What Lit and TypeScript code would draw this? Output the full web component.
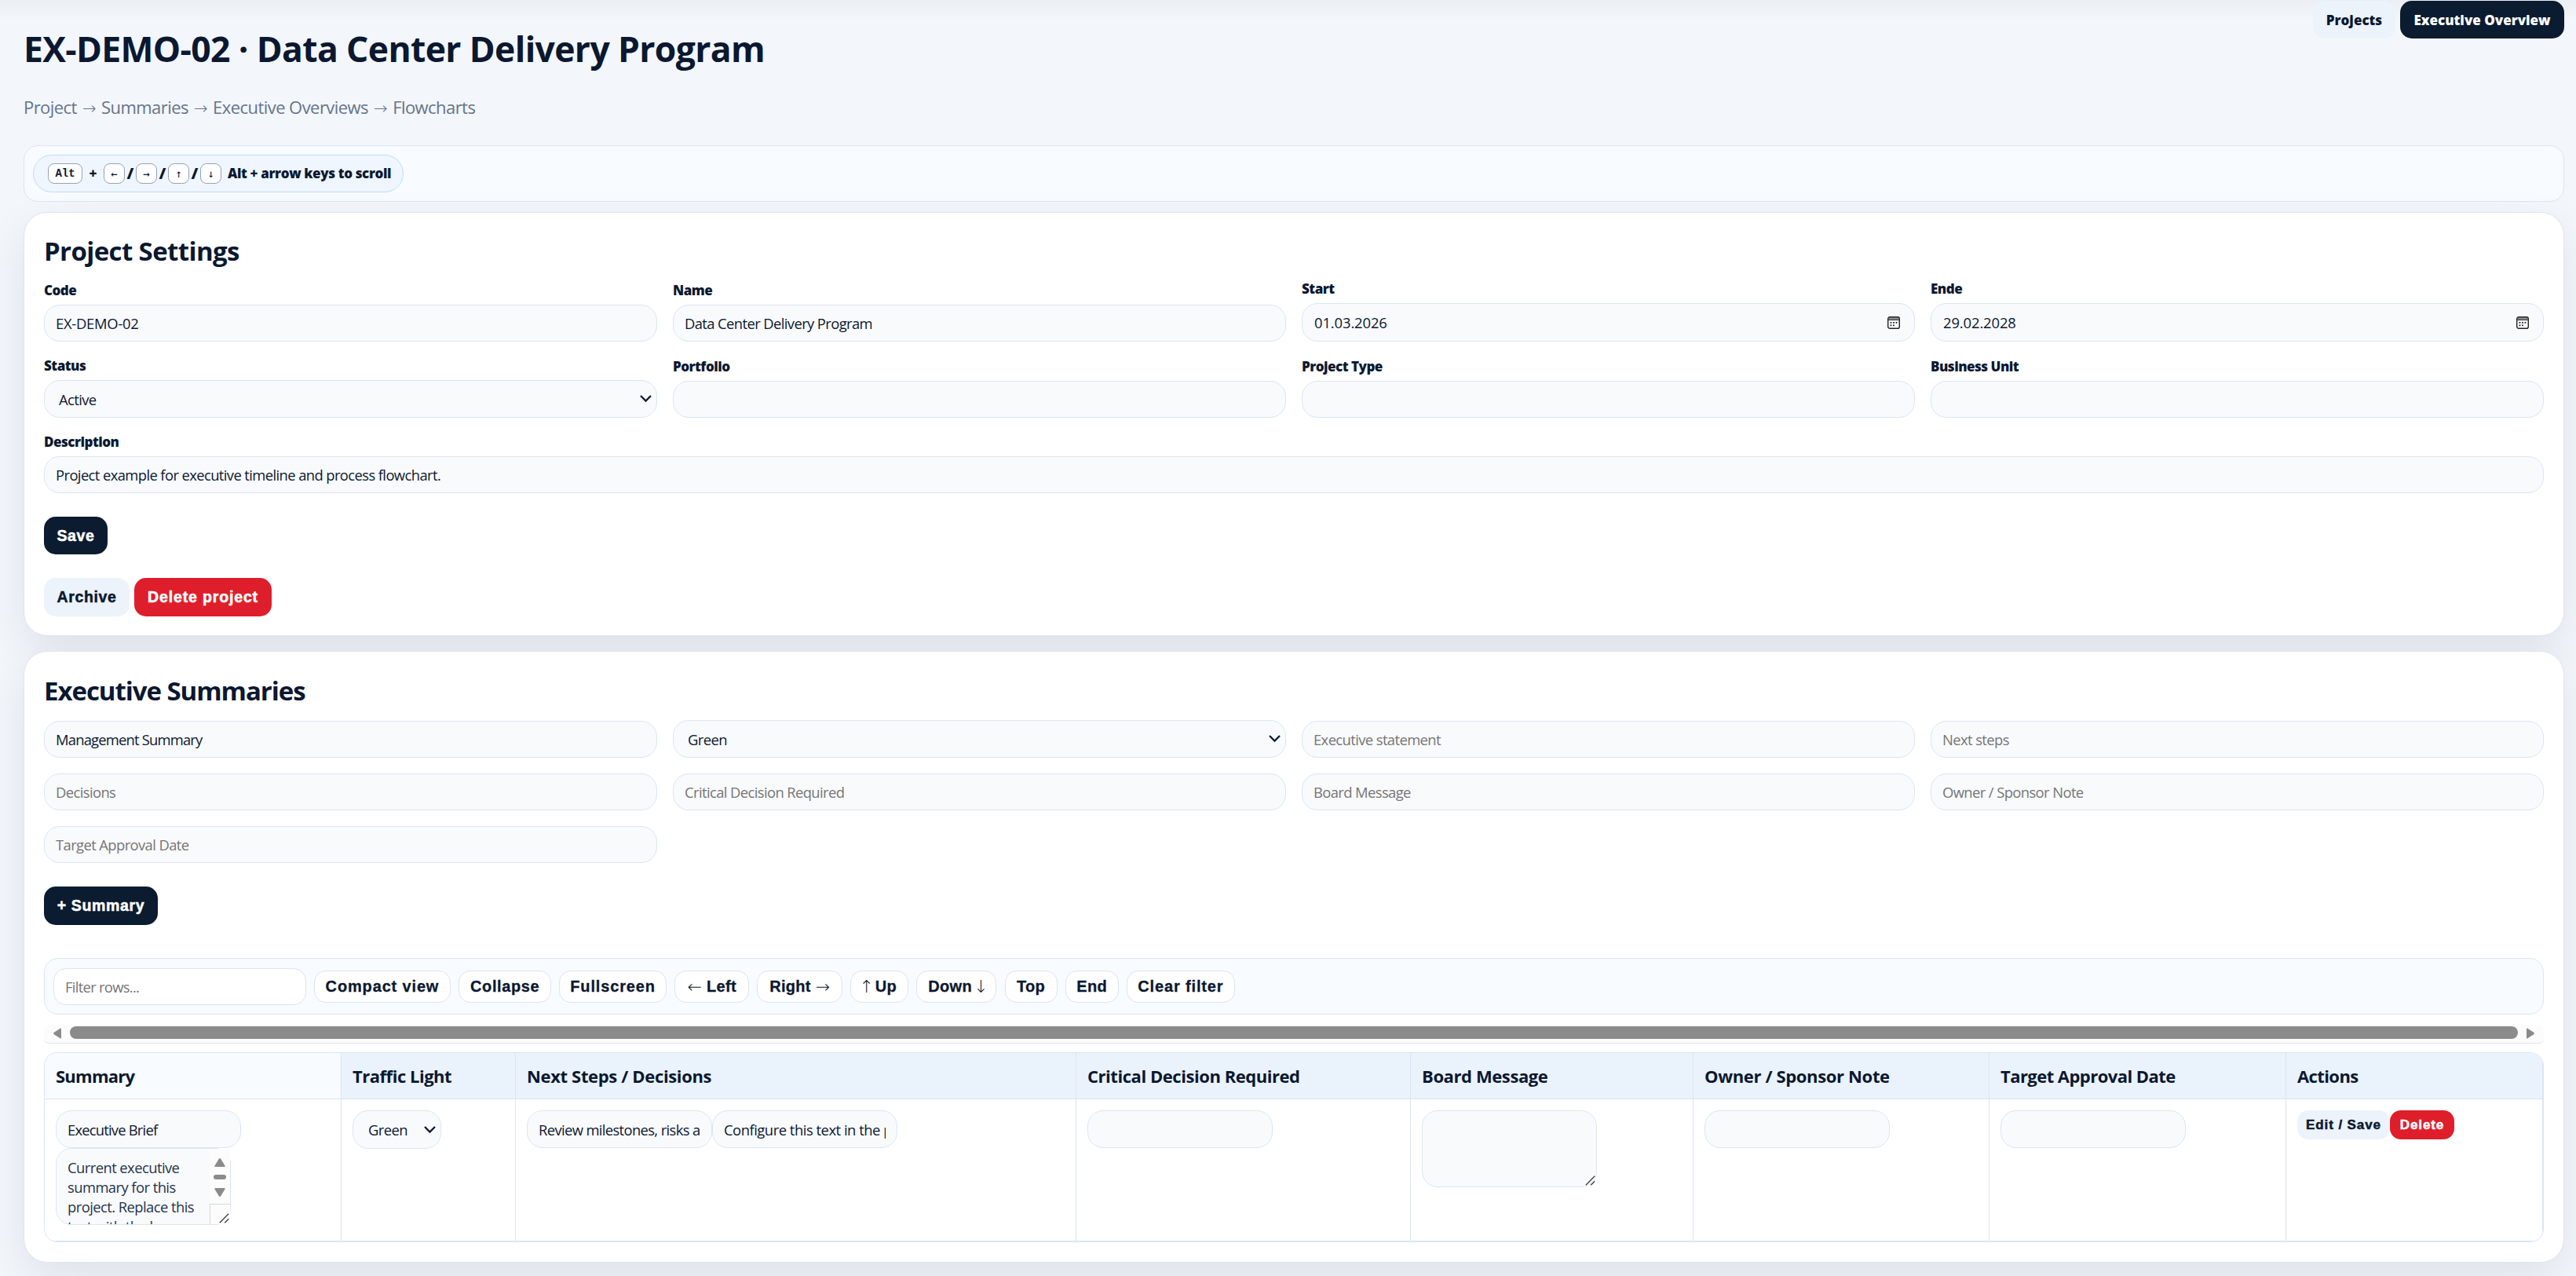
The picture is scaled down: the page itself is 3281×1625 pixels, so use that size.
import { LitElement, html, css, svg, nothing } from "lit";
import { customElement, property } from "lit/decorators.js";
import { classMap } from "lit/directives/class-map.js";
import { styleMap } from "lit/directives/style-map.js";

interface Field {
  label?: string;
  value?: string;
  placeholder?: string;
  kind?: "text" | "date" | "select";
  wide?: boolean;
  track?: number;
}

interface Action {
  text: string;
  before?: string;
  after?: string;
  vertical?: boolean;
  width: number;
  track?: number;
}

const settings: Field[] = [
  { label: "Code", value: "EX-DEMO-02", track: -0.25 },
  { label: "Name", value: "Data Center Delivery Program" },
  { label: "Start", value: "01.03.2026", kind: "date", track: -0.1 },
  { label: "Ende", value: "29.02.2028", kind: "date", track: -0.1 },
  { label: "Status", value: "Active", kind: "select" },
  { label: "Portfolio", value: "" },
  { label: "Project Type", value: "" },
  { label: "Business Unit", value: "" },
  { label: "Description", value: "Project example for executive timeline and process flowchart.", wide: true },
];

const summaryFields: Field[] = [
  { value: "Management Summary", track: -0.8 },
  { value: "Green", kind: "select" },
  { placeholder: "Executive statement" },
  { placeholder: "Next steps" },
  { placeholder: "Decisions" },
  { placeholder: "Critical Decision Required" },
  { placeholder: "Board Message" },
  { placeholder: "Owner / Sponsor Note" },
  { placeholder: "Target Approval Date" },
];

const tools: Action[] = [
  { text: "Compact view", width: 174.5, track: 0.85 },
  { text: "Collapse", width: 117.5, track: 0.6 },
  { text: "Fullscreen", width: 137, track: 0.85 },
  { text: "Left", before: "←", width: 95 },
  { text: "Right", after: "→", width: 108.5 },
  { text: "Up", before: "↑", vertical: true, width: 74 },
  { text: "Down", after: "↓", vertical: true, width: 102 },
  { text: "Top", width: 67 },
  { text: "End", width: 68 },
  { text: "Clear filter", width: 138, track: 0.85 },
];

const columns = [
  { title: "Summary", width: 378, track: -0.75 },
  { title: "Traffic Light", width: 222, track: -0.48 },
  { title: "Next Steps / Decisions", width: 714, track: -0.35 },
  { title: "Critical Decision Required", width: 426, track: -0.45 },
  { title: "Board Message", width: 360, track: -0.4 },
  { title: "Owner / Sponsor Note", width: 377, track: -0.35 },
  { title: "Target Approval Date", width: 378, track: -0.55 },
  { title: "Actions", width: 327, track: -0.6 },
];

const fieldStyles = css`
  .field {
    display: flex;
    flex-direction: column;
    justify-content: flex-end;
  }
  .label {
    font-size: 17px;
    font-weight: 800;
    line-height: 25px;
    letter-spacing: -0.5px;
    margin-bottom: 6px;
  }
  .control {
    box-sizing: border-box;
    display: flex;
    align-items: center;
    width: 100%;
    height: 47px;
    border: 1px solid #dbe5f3;
    border-radius: 20px;
    background: #f9fafc;
    padding: 0 14px;
  }
  .control.select {
    height: 48px;
    padding: 0 5px 0 18px;
  }
  .control.date {
    height: 49px;
    padding: 0 18px 0 15px;
  }
  .entry {
    flex: 1;
    min-width: 0;
    height: 100%;
    border: 0;
    padding: 0;
    background: transparent;
    outline: none;
    color: #0b1830;
    font: 400 18.4px "Open Sans", "Noto Sans", sans-serif;
    letter-spacing: -0.6px;
  }
  .entry::placeholder {
    color: #757575;
    opacity: 1;
  }
  .icon {
    flex: none;
    display: block;
  }
`;

const chevron = svg`<svg class="icon" width="17" height="12" viewBox="0 0 17 12"><path d="M2 2 8.500 8.500 15 2" fill="none" stroke="#0b1830" stroke-width="2.3"/></svg>`;

const calendar = svg`<svg class="icon" width="16" height="16" viewBox="0 0 16 16">
  <rect x="1.500" y="1.200" width="13" height="3" fill="#8a8a8a"/>
  <rect x="0.700" y="0.700" width="14.600" height="14.600" rx="2.400" fill="none" stroke="#222" stroke-width="1.400"/>
  <path d="M1 4.500h14" stroke="#333" stroke-width="1"/>
  <g fill="#111"><rect x="3.600" y="7" width="1.700" height="1.700"/><rect x="7.100" y="7" width="1.700" height="1.700"/><rect x="10.600" y="7" width="1.700" height="1.700"/><rect x="3.600" y="10.500" width="1.700" height="1.700"/><rect x="7.100" y="10.500" width="1.700" height="1.700"/></g>
</svg>`;

const grip = svg`<svg class="grip" width="13" height="13" viewBox="0 0 13 13"><path d="M.8 12.200 12.200.8M7.200 12.200 12.200 7.200" stroke="#444" stroke-width="1.4" fill="none"/></svg>`;

@customElement("form-field")
export class FormField extends LitElement {
  @property({ attribute: false }) data: Field = {};
  static styles = [
    fieldStyles,
    css`
      :host {
        display: block;
        min-width: 0;
      }
    `,
  ];
  render() {
    const f = this.data;
    return html`<label class="field">
      ${f.label ? html`<span class="label">${f.label}</span>` : nothing}
      <span class=${classMap({ control: true, select: f.kind === "select", date: f.kind === "date" })}>
        <input
          class="entry"
          .value=${f.value ?? ""}
          placeholder=${f.placeholder ?? ""}
          style=${styleMap(f.track !== undefined ? { letterSpacing: `${f.track}px` } : {})}
        />
        ${f.kind === "select" ? chevron : f.kind === "date" ? calendar : nothing}
      </span>
    </label>`;
  }
}

@customElement("app-root")
export class AppRoot extends LitElement {
  static styles = css`
    :host {
      display: block;
      height: 1625px;
      overflow: hidden;
      color: #0b1830;
      background: linear-gradient(#ebeef3, rgba(235, 238, 243, 0) 26px) #f3f6fb;
      font-family: "Open Sans", "Noto Sans", "Liberation Sans", sans-serif;
    }
    .page {
      padding: 0 15px 0 30px;
    }
    .top {
      display: flex;
      justify-content: space-between;
      align-items: flex-start;
      height: 185px;
    }
    .title {
      margin: 32px 0 0;
      font-size: 44.5px;
      line-height: 60px;
      letter-spacing: -0.65px;
      font-weight: 700;
    }
    .trail {
      margin: 29px 0 0;
      font-size: 22px;
      line-height: 30px;
      letter-spacing: -0.56px;
      color: #64748b;
    }
    .trail-arrow {
      font: 200 21px/20px "DejaVu Sans Light", "DejaVu Sans", sans-serif;
      letter-spacing: 1px;
      margin: 0 0.3px 0 2px;
    }
    .nav {
      display: flex;
      gap: 6px;
      padding-top: 1px;
    }
    .link {
      box-sizing: border-box;
      height: 48px;
      width: 105px;
      border-radius: 15px;
      background: #ecf3fb;
      font-size: 17px;
      line-height: 50px;
      font-weight: 800;
      text-align: center;
    }
    .link.active {
      width: 209px;
      color: #fff;
      background: #0b1b30;
    }
    .hint-bar {
      box-sizing: border-box;
      height: 72px;
      border: 1px solid #dbe5f3;
      border-radius: 18px;
      background: #f8fbff;
      padding: 11px;
    }
    .hint {
      box-sizing: border-box;
      display: flex;
      align-items: center;
      width: 472px;
      height: 48px;
      border: 1px solid #bfdbfe;
      border-radius: 24px;
      background: #eff6ff;
      padding: 0 0 1px 18px;
      font-size: 17px;
      font-weight: 800;
    }
    .key {
      box-sizing: border-box;
      width: 27px;
      height: 26px;
      border: 1px solid #94a3b8;
      border-radius: 8px;
      background: #fff;
      font: 400 14px/25px "DejaVu Sans Mono", monospace;
      text-align: center;
    }
    .key.alt {
      width: 44px;
      font-family: "Liberation Mono", monospace;
      font-weight: 700;
    }
    .plus {
      width: 27px;
      text-align: center;
    }
    .slash {
      width: 14px;
      text-align: center;
      font-size: 20px;
    }
    .hint-text {
      margin-left: 8px;
      letter-spacing: -0.37px;
      white-space: nowrap;
    }
    .card {
      box-sizing: border-box;
      border: 1px solid #dbe5f3;
      border-radius: 30px;
      background: #fff;
      padding: 27px 25px 0;
      box-shadow: 0 20px 56px rgba(15, 23, 42, 0.085);
    }
    .settings {
      height: 540px;
      margin-top: 13px;
    }
    .summaries {
      height: 779px;
      margin-top: 19px;
    }
    .heading {
      margin: 0;
      font-size: 33px;
      line-height: 44px;
      letter-spacing: -0.62px;
      font-weight: 700;
    }
    .summaries .heading {
      padding-top: 1px;
      letter-spacing: -1.05px;
    }
    .grid {
      display: grid;
      grid-template-columns: repeat(4, minmax(0, 1fr));
      column-gap: 20px;
      row-gap: 18px;
      align-items: end;
      margin-top: 13px;
    }
    .summaries .grid {
      margin-top: 15px;
      row-gap: 20px;
    }
    .wide {
      grid-column: 1 / -1;
    }
    .actions {
      display: flex;
      gap: 6px;
      margin-top: 30px;
    }
    .btn {
      box-sizing: border-box;
      height: 49px;
      border: 0;
      border-radius: 15px;
      padding: 0;
      color: #fff;
      background: #0b1b30;
      font: 700 19.5px "Liberation Sans", sans-serif;
      letter-spacing: 0.65px;
      -webkit-text-stroke: 0.5px currentColor;
      text-align: center;
      white-space: nowrap;
    }
    .save {
      width: 81px;
      height: 48px;
    }
    .archive {
      width: 109px;
    }
    .remove {
      width: 175px;
      letter-spacing: 0.85px;
    }
    .add {
      width: 145px;
    }
    .soft {
      color: #0b1830;
      background: #ecf3fb;
    }
    .danger {
      background: #de1e2a;
    }
    .tools {
      box-sizing: border-box;
      display: flex;
      align-items: center;
      gap: 10.2px;
      height: 72px;
      margin-top: 42px;
      border: 1px solid #dbe5f3;
      border-radius: 18px;
      background: #f8fbff;
      padding: 0 11px;
    }
    .filter {
      box-sizing: border-box;
      width: 321.5px;
      height: 47px;
      border: 1px solid #dbe5f3;
      border-radius: 16px;
      padding: 0 14px;
      background: #fff;
      font: 400 18.4px "Open Sans", sans-serif;
      letter-spacing: -0.7px;
    }
    .filter::placeholder {
      color: #757575;
    }
    .tool {
      box-sizing: border-box;
      display: flex;
      align-items: center;
      justify-content: center;
      gap: 6px;
      height: 41px;
      border: 1px solid #dbe5f3;
      border-radius: 15px;
      padding: 0;
      color: #0b1830;
      background: #fff;
      font: 700 20px "Liberation Sans", sans-serif;
      letter-spacing: 0.3px;
      -webkit-text-stroke: 0.3px currentColor;
      white-space: nowrap;
    }
    .arrow {
      font: 200 22px/24px "DejaVu Sans Light", "DejaVu Sans", sans-serif;
      -webkit-text-stroke: 0;
      letter-spacing: 0;
      margin-top: 2px;
    }
    .arrow.vertical {
      margin-left: -4px;
      margin-right: -4px;
    }
    .scroll {
      box-sizing: border-box;
      display: flex;
      align-items: center;
      justify-content: space-between;
      height: 24px;
      margin-top: 13px;
      border-bottom: 1px solid #dbe5f3;
      border-radius: 6px;
      background: #fcfcfc;
      padding: 0 12px 4px;
    }
    .thumb {
      flex: 1;
      height: 16px;
      margin: 1px 11px 0;
      border-radius: 8px;
      background: #8b8b8b;
    }
    .tri {
      width: 10px;
      height: 14px;
      fill: #8b8b8b;
      margin-top: 2px;
    }
    .frame {
      box-sizing: border-box;
      height: 242px;
      margin-top: 11px;
      border: 1px solid #dbe5f3;
      border-radius: 17px;
      overflow: hidden;
    }
    .table {
      width: 100%;
      table-layout: fixed;
      border-collapse: separate;
      border-spacing: 0;
    }
    .th,
    .td {
      box-sizing: border-box;
      border-right: 1px solid #dbe5f3;
      border-bottom: 1px solid #dbe5f3;
      text-align: left;
    }
    .th {
      height: 59px;
      padding: 0 14px;
      background: #eaf2fc;
      font-size: 22px;
      line-height: 30px;
      font-weight: 700;
      white-space: nowrap;
    }
    .th:first-child {
      background: #f8fbff;
    }
    .td {
      height: 181px;
      padding: 14px 14px 0;
      vertical-align: top;
    }
    .stack {
      display: flex;
      flex-direction: column;
    }
    .pair {
      display: flex;
    }
    .area {
      position: relative;
      box-sizing: border-box;
      display: flex;
      width: 223px;
      height: 98px;
      border: 1px solid #dbe5f3;
      border-radius: 20px;
      background: #f9fafc;
    }
    .area-text {
      flex: 1;
      overflow: hidden;
      padding: 11px 0 0 14px;
      color: #26334a;
      font-size: 18.4px;
      line-height: 25px;
      letter-spacing: -0.56px;
      white-space: pre;
    }
    .rail {
      display: flex;
      flex-direction: column;
      align-items: center;
      width: 26px;
      background: #fcfcfc;
    }
    .rail-up {
      margin-top: 12px;
    }
    .rail-thumb {
      width: 16px;
      height: 6px;
      margin: 10px 0 11px;
      border-radius: 3px;
      background: #8b8b8b;
    }
    .rail-arrow {
      display: block;
      fill: #8b8b8b;
    }
    .corner {
      box-sizing: border-box;
      width: 26px;
      height: 26px;
      margin-top: auto;
      border: 1px solid #d5d7da;
      border-width: 1px 0 0 1px;
    }
    .grip {
      position: absolute;
      right: 1px;
      bottom: 1px;
    }
    .mini {
      height: 37px;
      border-radius: 14px;
      font-size: 17px;
      letter-spacing: 0.9px;
    }
    .edit {
      width: 118px;
    }
    .drop {
      width: 82px;
    }
  `;

  private textField(value = "", track = -0.6) {
    return html`<cell-field .value=${value} .track=${track}></cell-field>`;
  }

  private arrow(glyph: string, vertical = false) {
    return html`<span class=${classMap({ arrow: true, vertical })}>${glyph}</span>`;
  }

  render() {
    const next = html`<span class="trail-arrow">→</span>`;
    return html`<div class="page">
      <header class="top">
        <div>
          <h1 class="title">EX-DEMO-02 · Data Center Delivery Program</h1>
          <p class="trail">Project ${next} Summaries ${next} Executive Overviews ${next} Flowcharts</p>
        </div>
        <nav class="nav">
          <a class="link">Projects</a>
          <a class="link active">Executive Overview</a>
        </nav>
      </header>

      <div class="hint-bar">
        <div class="hint">
          <span class="key alt">Alt</span><span class="plus">+</span>
          ${["←", "→", "↑", "↓"].map(
            (k, i) => html`${i ? html`<span class="slash">/</span>` : nothing}<span class="key">${k}</span>`
          )}
          <span class="hint-text">Alt + arrow keys to scroll</span>
        </div>
      </div>

      <section class="card settings">
        <h2 class="heading">Project Settings</h2>
        <div class="grid">
          ${settings.map((f) => html`<form-field class=${f.wide ? "wide" : ""} .data=${f}></form-field>`)}
        </div>
        <div class="actions"><button class="btn save">Save</button></div>
        <div class="actions">
          <button class="btn soft archive">Archive</button>
          <button class="btn danger remove">Delete project</button>
        </div>
      </section>

      <section class="card summaries">
        <h2 class="heading">Executive Summaries</h2>
        <div class="grid">${summaryFields.map((f) => html`<form-field .data=${f}></form-field>`)}</div>
        <div class="actions"><button class="btn add">+ Summary</button></div>

        <div class="tools">
          <input class="filter" placeholder="Filter rows..." />
          ${tools.map(
            (t) => html`<button
              class="tool"
              style=${styleMap({ width: `${t.width}px`, ...(t.track ? { letterSpacing: `${t.track}px` } : {}) })}
            >${t.before ? this.arrow(t.before, t.vertical) : nothing}<span>${t.text}</span>${t.after
                ? this.arrow(t.after, t.vertical)
                : nothing}</button>`
          )}
        </div>

        <div class="scroll">
          <svg class="tri" viewBox="0 0 10 14"><path d="M9 .5Q10 0 10 1.500V12.500Q10 14 9 13.500L.8 8.300Q-.4 7 .8 5.700Z" /></svg>
          <div class="thumb"></div>
          <svg class="tri" viewBox="0 0 10 14"><path d="M1 .5Q0 0 0 1.500V12.500Q0 14 1 13.500L9.200 8.300Q10.400 7 9.200 5.700Z" /></svg>
        </div>

        <div class="frame">
          <table class="table">
            <colgroup>
              ${columns.map((c) => html`<col style=${styleMap({ width: `${c.width}px` })} />`)}
            </colgroup>
            <thead>
              <tr>
                ${columns.map(
                  (c) => html`<th class="th" style=${styleMap({ letterSpacing: `${c.track}px` })}>${c.title}</th>`
                )}
              </tr>
            </thead>
            <tbody>
              <tr>
                <td class="td">
                  <div class="stack">
                    ${this.textField("Executive Brief", -0.8)}
                    <div class="area">
                      <div class="area-text">${"Current executive\nsummary for this\nproject. Replace this\ntext with the key"}</div>
                      <div class="rail">
                        <svg class="rail-arrow rail-up" width="14" height="11" viewBox="0 0 14 11"><path d="M.5 9.500Q0 11 1.500 11H12.500Q14 11 13.500 9.500L8.300 1Q7-.8 5.700 1Z" /></svg>
                        <div class="rail-thumb"></div>
                        <svg class="rail-arrow" width="14" height="11" viewBox="0 0 14 11"><path d="M.5 1.500Q0 0 1.500 0H12.500Q14 0 13.500 1.500L8.300 10Q7 11.800 5.700 10Z" /></svg>
                        <div class="corner"></div>
                      </div>
                      ${grip}
                    </div>
                  </div>
                </td>
                <td class="td"><cell-field .value=${"Green"} .select=${true}></cell-field></td>
                <td class="td">
                  <div class="pair">
                    ${this.textField("Review milestones, risks a", -0.64)}
                    ${this.textField("Configure this text in the project settings", -0.48)}
                  </div>
                </td>
                <td class="td">${this.textField()}</td>
                <td class="td"><div class="area">${grip}</div></td>
                <td class="td">${this.textField()}</td>
                <td class="td">${this.textField()}</td>
                <td class="td">
                  <div class="pair">
                    <button class="btn mini soft edit">Edit / Save</button>
                    <button class="btn mini danger drop">Delete</button>
                  </div>
                </td>
              </tr>
            </tbody>
          </table>
        </div>
      </section>
    </div>`;
  }
}

@customElement("cell-field")
export class CellField extends LitElement {
  @property() value = "";
  @property({ type: Number }) track = -0.6;
  @property({ type: Boolean }) select = false;
  static styles = [
    fieldStyles,
    css`
      :host {
        display: block;
        width: 236px;
      }
      .control.cell {
        height: 48px;
        padding-left: 14px;
      }
      .pick {
        width: 113px;
        height: 49px;
        padding: 0 5px 0 19px;
      }
    `,
  ];
  render() {
    return html`<div class=${classMap({ control: true, cell: !this.select, pick: this.select })}>
      <input class="entry" .value=${this.value} style=${styleMap({ letterSpacing: `${this.track}px` })} />
      ${this.select ? chevron : nothing}
    </div>`;
  }
}
